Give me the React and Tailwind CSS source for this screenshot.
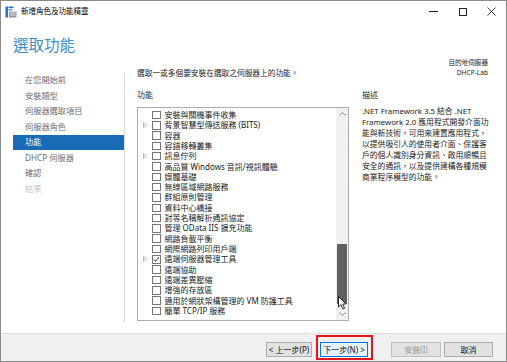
import React from 'react'

const features = [
  { t: '安裝與關機事件收集' },
  { t: '背景智慧型傳送服務 (BITS)', exp: true },
  { t: '容器' },
  { t: '容錯移轉叢集' },
  { t: '訊息佇列', exp: true },
  { t: '高品質 Windows 音訊/視訊體驗' },
  { t: '媒體基礎' },
  { t: '無線區域網路服務' },
  { t: '群組原則管理' },
  { t: '資料中心橋接' },
  { t: '對等名稱解析通訊協定' },
  { t: '管理 OData IIS 擴充功能' },
  { t: '網路負載平衡' },
  { t: '網際網路列印用戶端' },
  { t: '遠端伺服器管理工具', exp: true, checked: true },
  { t: '遠端協助' },
  { t: '遠端差異壓縮' },
  { t: '增強的存放區' },
  { t: '適用於網狀架構管理的 VM 防護工具' },
  { t: '簡單 TCP/IP 服務' },
]

const steps = [
  { t: '在您開始前' },
  { t: '安裝類型' },
  { t: '伺服器選取項目' },
  { t: '伺服器角色' },
  { t: '功能', active: true },
  { t: 'DHCP 伺服器' },
  { t: '確認' },
  { t: '結果', muted: true },
]

function AppIcon() {
  return (
    <svg width="12" height="12" viewBox="0 0 12 12">
      <rect x="0.5" y="0.5" width="2.5" height="11" fill="#2a6fc0" />
      <rect x="3.5" y="0.5" width="5" height="1.6" fill="#2a6fc0" />
      <rect x="3.5" y="3" width="4" height="1.4" fill="#4a8fd8" />
      <rect x="4" y="5.5" width="7.5" height="6" fill="#8f9aa6" />
      <rect x="5" y="6.5" width="5.5" height="1" fill="#dfe4ea" />
      <rect x="5" y="8.5" width="5.5" height="1" fill="#dfe4ea" />
    </svg>
  )
}

function Expander() {
  return (
    <svg width="4" height="6" viewBox="0 0 4 6">
      <path d="M0.5 0.5 L3.5 3 L0.5 5.5 Z" fill="none" stroke="#a6a6a6" strokeWidth="0.8" />
    </svg>
  )
}

function Chevron({ up }) {
  return (
    <svg width="7" height="4" viewBox="0 0 7 4">
      <path d={up ? 'M0.5 3.5 L3.5 0.5 L6.5 3.5' : 'M0.5 0.5 L3.5 3.5 L6.5 0.5'} fill="none" stroke="#7a7a7a" strokeWidth="0.9" />
    </svg>
  )
}

function Button({ children, disabled, primary }) {
  return (
    <div
      className={`h-[15px] flex items-center justify-center border text-[8px] leading-none ${
        disabled
          ? 'bg-[#cccccc]/40 border-[#bfbfbf] text-[#9a9a9a]'
          : primary
          ? 'bg-[#e5f1fb] border-[#0078d7] text-[#111]'
          : 'bg-[#e1e1e1] border-[#adadad] text-[#111]'
      }`}
    >
      {children}
    </div>
  )
}

export default function App() {
  return (
    <div className="w-[507px] h-[362px] border border-[#8a8a8a] bg-white font-['Noto_Sans','Noto_Sans_CJK_TC',sans-serif] overflow-hidden">
      {/* Title bar */}
      <div className="h-[21px] flex items-center bg-white">
        <div className="ml-[4px] mr-[4px] flex items-center">
          <AppIcon />
        </div>
        <span className="text-[7.5px] text-black leading-none">新增角色及功能精靈</span>
        <div className="ml-auto flex items-center h-full">
          <div className="w-[29px] h-full flex items-center justify-center">
            <div className="w-[9px] h-px bg-[#222]" />
          </div>
          <div className="w-[29px] h-full flex items-center justify-center">
            <div className="w-[8px] h-[8px] border border-[#222]" />
          </div>
          <div className="w-[29px] h-full flex items-center justify-center">
            <svg width="9" height="9" viewBox="0 0 9 9">
              <path d="M0.5 0.5 L8.5 8.5 M8.5 0.5 L0.5 8.5" stroke="#222" strokeWidth="0.9" />
            </svg>
          </div>
        </div>
      </div>

      {/* Content */}
      <div className="h-[311px] flex flex-col">
        {/* Header */}
        <div className="h-[46px] flex items-start">
          <div className="pl-[12px] pt-[13px] text-[15.5px] leading-[20px] text-[#3d8fc7]">選取功能</div>
          <div className="ml-auto pr-[18px] pt-[36px] text-right text-[6.6px] leading-[10px] text-[#222]">
            <div>目的地伺服器</div>
            <div>DHCP-Lab</div>
          </div>
        </div>

        {/* Body */}
        <div className="flex-1 flex">
          <div className="w-[124px] h-[250px] mt-[4px] border-r border-[#dcdcdc] pt-[0.5px]">
            {steps.map((s) => (
              <div
                key={s.t}
                className={`ml-[12px] h-[15.5px] pl-[12px] flex items-center text-[8.2px] leading-none ${
                  s.active ? 'bg-[#1a6bb5] text-white' : s.muted ? 'text-[#c4c4c4]' : 'text-[#6e6e6e]'
                }`}
              >
                {s.t}
              </div>
            ))}
          </div>

          <div className="flex-1 pl-[12px] pr-[13px]">
            <div className="h-[12px] flex items-center text-[7.7px] leading-none text-[#222]">
              選取一或多個要安裝在選取之伺服器上的功能。
            </div>
            <div className="flex mt-[9px]">
              {/* Features list */}
              <div className="w-[212px]">
                <div className="h-[12px] flex items-center text-[8px] leading-none text-[#222]">功能</div>
                <div className="relative mt-[6px] h-[214px] border border-[#abadb3] flex">
                  <div className="flex-1 pt-[1.8px]">
                    {features.map((f) => (
                      <div key={f.t} className="h-[10.32px] flex items-center">
                        <div className="w-[14px] flex justify-center">{f.exp && <Expander />}</div>
                        <div className="w-[8.5px] h-[8.5px] border border-[#767676] bg-white flex items-center justify-center">
                          {f.checked && (
                            <svg width="7" height="7" viewBox="0 0 7 7">
                              <path d="M0.8 3.6 L2.7 5.6 L6.3 0.9" fill="none" stroke="#111" strokeWidth="0.9" />
                            </svg>
                          )}
                        </div>
                        <span className="ml-[4px] text-[8px] leading-none text-[#1a1a1a] whitespace-nowrap">{f.t}</span>
                      </div>
                    ))}
                  </div>
                  {/* Scrollbar */}
                  <div className="w-[12px] bg-[#f0f0f0] flex flex-col">
                    <div className="h-[12px] flex items-center justify-center">
                      <Chevron up />
                    </div>
                    <div className="h-[124px]" />
                    <div className="h-[60px] mx-px bg-[#606060]" />
                    <div className="flex-1" />
                    <div className="h-[12px] flex items-center justify-center">
                      <Chevron />
                    </div>
                  </div>
                  {/* Mouse pointer */}
                  <svg className="absolute left-[200px] top-[188px]" width="9" height="14" viewBox="0 0 9 14">
                    <path d="M0.5 0.5 L0.5 11 L3 8.6 L5 13 L6.6 12.2 L4.7 8 L8 8 Z" fill="#fff" stroke="#000" strokeWidth="0.8" />
                  </svg>
                </div>
              </div>

              {/* Description */}
              <div className="ml-[13px] flex-1">
                <div className="h-[12px] flex items-center text-[8px] leading-none text-[#222]">描述</div>
                <div className="mt-[4.5px] text-[7.8px] leading-[11px] text-[#222] whitespace-nowrap">
                  .NET Framework 3.5 結合 .NET
                  <br />
                  Framework 2.0 應用程式開發介面功
                  <br />
                  能與新技術，可用來建置應用程式，
                  <br />
                  以提供吸引人的使用者介面、保護客
                  <br />
                  戶的個人識別身分資訊、啟用順暢且
                  <br />
                  安全的通訊，以及提供建構各種規模
                  <br />
                  商業程序模型的功能。
                </div>
              </div>
            </div>
          </div>
        </div>
      </div>

      {/* Footer */}
      <div className="h-[28px] border-t border-[#dfdfdf] bg-[#f0f0f0] flex items-start pt-[8px] pr-[13px] justify-end">
        <div className="w-[46px]">
          <Button>&lt; 上一步(P)</Button>
        </div>
        <div className="relative w-[48px] ml-[8px]">
          <Button primary>下一步(N) &gt;</Button>
          <div className="absolute -top-[7px] -bottom-[3px] -left-[4px] -right-[5px] border-2 border-[#e3161c]" />
        </div>
        <div className="w-[50px] ml-[23px]">
          <Button disabled>安裝(I)</Button>
        </div>
        <div className="w-[49px] ml-[3px]">
          <Button>取消</Button>
        </div>
      </div>
    </div>
  )
}
